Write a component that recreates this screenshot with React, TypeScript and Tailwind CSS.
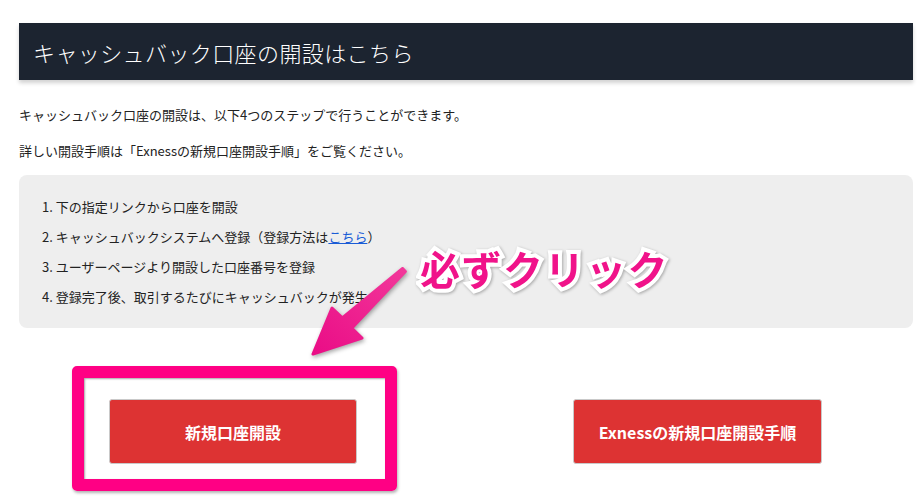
import React from 'react';

const jp = "font-['Noto_Sans_CJK_JP','Noto_Sans',sans-serif]";

const steps: React.ReactNode[] = [
  '下の指定リンクから口座を開設',
  <>
    キャッシュバックシステムへ登録（登録方法は
    <a className="text-[#1a5cd6] underline">こちら</a>）
  </>,
  'ユーザーページより開設した口座番号を登録',
  '登録完了後、取引するたびにキャッシュバックが発生',
];

function Arrow() {
  return (
    <svg
      className="absolute left-[300px] top-[255px] drop-shadow-[1px_2px_2px_rgba(0,0,0,0.35)]"
      width="120"
      height="110"
      viewBox="300 255 120 110"
    >
      <defs>
        <linearGradient id="ar" x1="1" y1="0" x2="0" y2="1">
          <stop offset="0" stopColor="#f2389a" />
          <stop offset="1" stopColor="#ea0c86" />
        </linearGradient>
      </defs>
      <polygon
        points="402.6,268.5 342.3,317.9 332,308 313,354 362,338 351.7,328.1 405.4,271.5"
        fill="url(#ar)"
        stroke="url(#ar)"
        strokeWidth="3"
        strokeLinejoin="round"
      />
    </svg>
  );
}

export default function App() {
  return (
    <div className={`relative w-[924px] h-[500px] bg-white overflow-hidden ${jp}`}>
      <div className="ml-[19px] w-[894px] pt-[23px]">
        <div className="h-[57px] bg-[#1c2430] flex items-center pl-[14px] shadow-[0_3px_4px_rgba(0,0,0,0.18)]">
          <h2 className="text-white text-[22px] font-light leading-none tracking-[0.4px]">キャッシュバック口座の開設はこちら</h2>
        </div>

        <p className="mt-[25px] text-[13px] leading-[20px] text-[#222]">
          キャッシュバック口座の開設は、以下4つのステップで行うことができます。
        </p>
        <p className="mt-[16px] text-[13px] leading-[20px] text-[#222]">
          詳しい開設手順は「Exnessの新規口座開設手順」をご覧ください。
        </p>

        <div className="mt-[14px] h-[153px] bg-[#eeeeee] rounded-[8px] pl-[23px] pt-[22px] flex flex-col gap-[10px]">
          {steps.map((s, i) => (
            <div key={i} className="text-[13px] leading-[20px] text-[#222]">
              {i + 1}. {s}
            </div>
          ))}
        </div>

        <div className="mt-[71px] flex justify-between pl-[90px] pr-[91px]">
          <div className="relative">
            <div className="absolute left-[-37px] top-[-33px] w-[325px] h-[125px] border-[12px] border-[#ff0084] rounded-[5px] shadow-[1px_2px_3px_rgba(0,0,0,0.3),inset_1px_1px_2px_rgba(0,0,0,0.35)]" />
            <button className="relative w-[248px] h-[65px] bg-[#dd3333] rounded-[3px] border border-[#c9c9c9] text-white font-bold text-[16px]">
              新規口座開設
            </button>
          </div>
          <button className="w-[249px] h-[65px] bg-[#dd3333] rounded-[3px] border border-[#c9c9c9] text-white font-bold text-[16px]">
            Exnessの新規口座開設手順
          </button>
        </div>
      </div>

      <Arrow />
      <div className="absolute left-[420px] top-[238px] text-[40px] font-bold leading-[60px] text-[#f0138a] tracking-[1.5px] [-webkit-text-stroke:8px_white] [paint-order:stroke_fill] drop-shadow-[1px_1px_1.5px_rgba(0,0,0,0.3)]">
        必ずクリック
      </div>
    </div>
  );
}
